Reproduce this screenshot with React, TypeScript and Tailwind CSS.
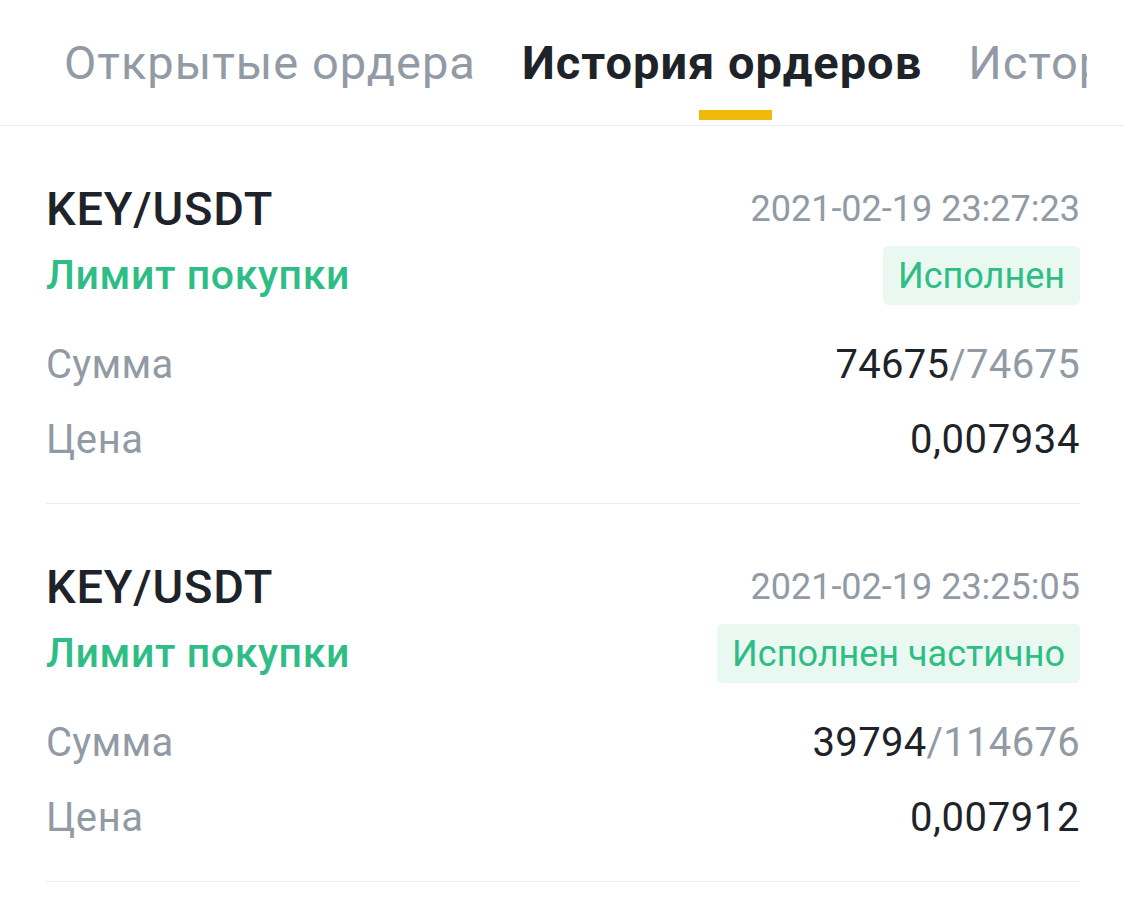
const tabs = [
  { label: "Открытые ордера", active: false },
  { label: "История ордеров", active: true },
  { label: "История сделок", active: false },
];

const orders = [
  {
    pair: "KEY/USDT",
    time: "2021-02-19 23:27:23",
    side: "Лимит покупки",
    status: "Исполнен",
    filled: "74675",
    total: "74675",
    price: "0,007934",
  },
  {
    pair: "KEY/USDT",
    time: "2021-02-19 23:25:05",
    side: "Лимит покупки",
    status: "Исполнен частично",
    filled: "39794",
    total: "114676",
    price: "0,007912",
  },
];

export default function App() {
  return (
    <div className="min-h-[910px] w-[1124px] bg-white font-['Roboto',sans-serif] text-[#1e2329]">
      <div className="flex h-[126px] border-b border-[#eaecef] pl-[64px] pr-[37px]">
        <div className="flex gap-[46px] overflow-hidden whitespace-nowrap">
          {tabs.map((tab) => (
            <div key={tab.label} className="flex shrink-0 flex-col">
              <span
                className={`mt-[35px] text-[47px] leading-[56px] tracking-[1px] ${
                  tab.active ? "font-bold text-[#1e2329]" : "text-[#929aa5]"
                }`}
              >
                {tab.label}
              </span>
              {tab.active && <div className="mt-[19px] ml-[177px] h-[10px] w-[73px] bg-[#f0b90b]" />}
            </div>
          ))}
        </div>
      </div>

      <div className="pl-[46px] pr-[44px]">
        {orders.map((o) => (
          <div key={o.time} className="border-b border-[#eaecef] pt-[59px] pb-[39px]">
            <div className="flex h-12 items-center justify-between">
              <span className="text-[47px] font-medium tracking-[0.8px]">{o.pair}</span>
              <span className="text-[36px] text-[#929aa5]">{o.time}</span>
            </div>
            <div className="mt-[13px] flex h-[59px] items-center justify-between">
              <span className="text-[41px] font-medium tracking-[0.6px] text-[#2ebd85]">{o.side}</span>
              <span className="flex h-full items-center rounded-[5px] bg-[#e9f8f1] px-[15px] text-[36px] text-[#2ebd85]">
                {o.status}
              </span>
            </div>
            <div className="mt-[36px] flex h-12 items-center justify-between text-[40px] tracking-[0.3px]">
              <span className="text-[#929aa5]">Сумма</span>
              <span>
                {o.filled}
                <span className="text-[#929aa5]">/{o.total}</span>
              </span>
            </div>
            <div className="mt-[27px] flex h-12 items-center justify-between text-[40px] tracking-[0.6px]">
              <span className="text-[#929aa5]">Цена</span>
              <span>{o.price}</span>
            </div>
          </div>
        ))}
      </div>
    </div>
  );
}
